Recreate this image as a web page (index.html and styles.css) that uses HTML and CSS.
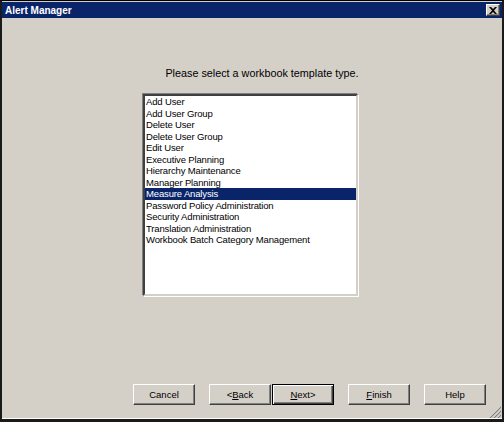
FILE: index.html
```html
<!DOCTYPE html>
<html>
<head>
<meta charset="utf-8">
<link rel="stylesheet" href="styles.css">
</head>
<body>
<div class="window">
  <div class="titlebar">
    <span class="title">Alert Manager</span>
    <span class="close"><svg width="8" height="7" viewBox="0 0 8 7"><path d="M0 0h2l2 2 2-2h2L5 3.5 8 7H6L4 5 2 7H0l3-3.5z" fill="#000"/></svg></span>
  </div>
  <div class="content">
    <p class="prompt">Please select a workbook template type.</p>
    <ul class="listbox">
      <li>Add User</li>
      <li>Add User Group</li>
      <li>Delete User</li>
      <li>Delete User Group</li>
      <li>Edit User</li>
      <li>Executive Planning</li>
      <li>Hierarchy Maintenance</li>
      <li>Manager Planning</li>
      <li class="selected">Measure Analysis</li>
      <li>Password Policy Administration</li>
      <li>Security Administration</li>
      <li>Translation Administration</li>
      <li>Workbook Batch Category Management</li>
    </ul>
    <div class="buttons">
      <button class="btn">Cancel</button>
      <button class="btn back">&lt;<u>B</u>ack</button>
      <button class="btn default"><u>N</u>ext&gt;</button>
      <button class="btn finish"><u>F</u>inish</button>
      <button class="btn help">Help</button>
    </div>
  </div>
  <svg class="grip" width="12" height="12" viewBox="0 0 12 12">
    <path d="M11 1L1 11M11 5L5 11M11 9L9 11" stroke="#fff" stroke-width="1"/>
    <path d="M12 1L1 12M12 5L5 12M12 9L9 12" stroke="#808080" stroke-width="1.2"/>
  </svg>
</div>
</body>
</html>
```
FILE: styles.css
```css
html, body {
  margin: 0;
  padding: 0;
  background: #d4d0c8;
}
.window {
  position: relative;
  box-sizing: border-box;
  width: 504px;
  height: 422px;
  border-top: 1px solid #000;
  border-left: 2px solid #1a1a1a;
  border-right: 2px solid #1a1a1a;
  border-bottom: 3px solid #1a1a1a;
  background: #d4d0c8;
  display: flex;
  flex-direction: column;
  font-family: "Liberation Sans", Arial, sans-serif;
  font-size: 11px;
  color: #000;
}
.titlebar {
  margin-top: 1px;
  height: 16px;
  background: #0a246a;
  display: flex;
  align-items: center;
  justify-content: space-between;
  padding: 0 2px 0 3px;
}
.title {
  color: #fff;
  font-weight: bold;
  font-size: 10px;
  font-family: "Liberation Sans", Arial, sans-serif;
}
.close {
  width: 14px;
  height: 12px;
  box-sizing: border-box;
  background: #d4d0c8;
  border-top: 1px solid #fff;
  border-left: 1px solid #fff;
  border-right: 1px solid #404040;
  border-bottom: 1px solid #404040;
  box-shadow: inset -1px -1px 0 #808080;
  display: flex;
  align-items: center;
  justify-content: center;
}
.content {
  flex: 1;
  display: flex;
  flex-direction: column;
  border-bottom: 1px solid #fff;
}
.prompt {
  margin: 49px 0 0 0;
  padding-left: 20px;
  line-height: 13px;
  text-align: center;
  font-size: 10.8px;
}
.listbox {
  list-style: none;
  margin: 14px 0 0 141px;
  padding: 0;
  width: 215px;
  height: 202px;
  box-sizing: border-box;
  background: #fff;
  border-top: 2px solid #404040;
  border-left: 2px solid #404040;
  border-right: 2px solid #d4d0c8;
  border-bottom: 2px solid #d4d0c8;
  box-shadow: -1px -1px 0 #808080, 1px 1px 0 #fff;
  font-size: 9.5px;
  letter-spacing: -0.15px;
}
.listbox li {
  height: 11.5px;
  line-height: 11.5px;
  padding-left: 1px;
  white-space: nowrap;
}
.listbox li.selected {
  background: #0a246a;
  color: #fff;
}
.buttons {
  display: flex;
  margin: 88px 0 0 131px;
  gap: 14px;
}
.btn {
  width: 62px;
  height: 21px;
  box-sizing: border-box;
  margin: 0;
  padding: 0;
  font-family: "Liberation Sans", Arial, sans-serif;
  font-size: 9.5px;
  color: #000;
  background: #d4d0c8;
  border-top: 1px solid #fff;
  border-left: 1px solid #fff;
  border-right: 1px solid #404040;
  border-bottom: 1px solid #404040;
  box-shadow: inset -1px -1px 0 #808080;
}
.btn.default {
  margin-left: -13px;
  border: 1px solid #000;
  box-shadow: inset 1px 1px 0 #fff, inset -1px -1px 0 #404040, inset -2px -2px 0 #808080;
}
.grip {
  position: absolute;
  right: 1px;
  bottom: 1px;
}
```
